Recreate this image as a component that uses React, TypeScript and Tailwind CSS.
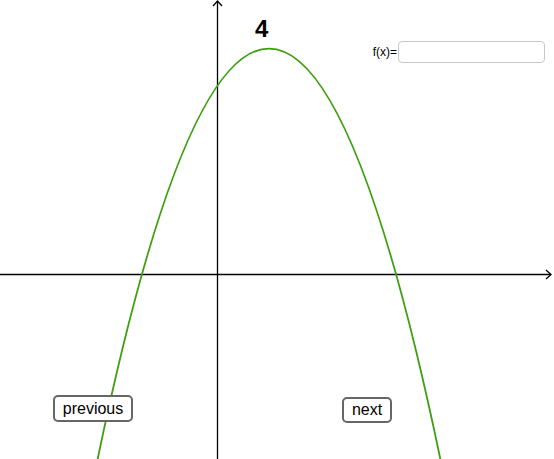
const font = { fontFamily: '"Liberation Sans", Arial, sans-serif' };

export default function App() {
  return (
    <div
      className="relative w-[554px] h-[459px] overflow-hidden bg-white text-black"
      style={font}
    >
      {/* graph canvas */}
      <svg
        className="absolute inset-0"
        width={554}
        height={459}
        viewBox="0 0 554 459"
      >
        <g stroke="#000" strokeWidth={1.3} fill="none">
          <line x1={0} y1={274.5} x2={551} y2={274.5} />
          <polyline points="546,270 551,274.5 546,279" />
          <line x1={217.5} y1={459} x2={217.5} y2={1} />
          <polyline points="213,6 217.5,1 222,6" />
        </g>
        <path
          d="M95 471.8 Q269 -374.7 443 471.8"
          stroke="#3c9f10"
          strokeWidth={1.8}
          fill="none"
        />
      </svg>

      <div className="absolute left-[255px] top-[17px] text-[24px] font-bold leading-none">
        4
      </div>

      <div className="absolute left-[360px] top-[41px] flex items-center">
        <span className="w-[37px] text-right text-[12px] leading-none">f(x)=</span>
        <input
          className="ml-px h-[22px] w-[147px] rounded-[4px] border border-[#c8c8c8] bg-white px-1 text-[12px] outline-none"
          style={font}
        />
      </div>

      <button className="absolute left-[53px] top-[395px] flex h-[27px] w-[80px] items-center justify-center rounded-[5px] border-2 border-[#666] bg-white text-[16px]">
        previous
      </button>
      <button className="absolute left-[342px] top-[397px] flex h-[26px] w-[50px] items-center justify-center rounded-[5px] border-2 border-[#666] bg-white text-[16px]">
        next
      </button>
    </div>
  );
}
